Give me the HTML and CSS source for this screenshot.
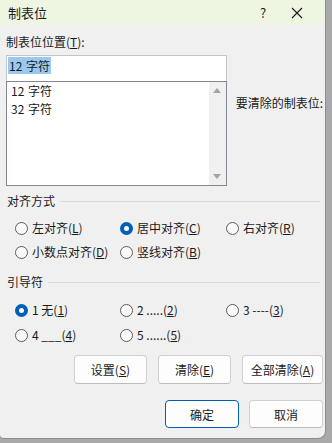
FILE: index.html
```html
<!DOCTYPE html>
<html lang="zh-CN">
<head>
    <meta charset="UTF-8">
    <meta name="viewport" content="width=device-width, initial-scale=1.0">
    <link rel="stylesheet" href="styles.css">
</head>
<body>
    <div class="dialog">
        <!-- Title bar -->
        <div class="titlebar">
            <span class="title">制表位</span>
            <span class="help">?</span>
            <span class="close">
                <svg width="12" height="12" viewBox="0 0 12 12"><path d="M1 1L11 11M11 1L1 11" stroke="#1a1a1a" stroke-width="1.1" fill="none"/></svg>
            </span>
        </div>

        <div class="content">
            <!-- Tab position and list -->
            <div class="tab-row">
                <div class="tab-left">
                    <div class="label">制表位位置(<u>T</u>):</div>
                    <div class="input"><span class="selected">12 字符</span></div>
                    <div class="list">
                        <div class="items">
                            <div>12 字符</div>
                            <div>32 字符</div>
                        </div>
                        <div class="scrollbar">
                            <span class="arrow up"></span>
                            <span class="arrow down"></span>
                        </div>
                    </div>
                </div>
                <div class="tab-right">要清除的制表位:</div>
            </div>

            <!-- Alignment -->
            <div class="group-title">对齐方式</div>
            <div class="radio-grid first">
                <label class="radio"><span class="dot"></span>左对齐(<u>L</u>)</label>
                <label class="radio"><span class="dot checked"></span>居中对齐(<u>C</u>)</label>
                <label class="radio"><span class="dot"></span>右对齐(<u>R</u>)</label>
            </div>
            <div class="radio-grid second">
                <label class="radio"><span class="dot"></span>小数点对齐(<u>D</u>)</label>
                <label class="radio"><span class="dot"></span>竖线对齐(<u>B</u>)</label>
            </div>

            <!-- Leader -->
            <div class="group-title leader">引导符</div>
            <div class="radio-grid lead-first">
                <label class="radio"><span class="dot checked"></span>1 无(<u>1</u>)</label>
                <label class="radio"><span class="dot"></span>2 .....(<u>2</u>)</label>
                <label class="radio"><span class="dot"></span>3 ----(<u>3</u>)</label>
            </div>
            <div class="radio-grid lead-second">
                <label class="radio"><span class="dot"></span>4 ___(<u>4</u>)</label>
                <label class="radio"><span class="dot"></span>5 ......(<u>5</u>)</label>
            </div>

            <!-- Buttons -->
            <div class="button-row">
                <button class="btn">设置(<u>S</u>)</button>
                <button class="btn">清除(<u>E</u>)</button>
                <button class="btn wide">全部清除(<u>A</u>)</button>
            </div>
            <div class="button-row ok-row">
                <button class="btn default">确定</button>
                <button class="btn">取消</button>
            </div>
        </div>
    </div>
</body>
</html>
```

FILE: styles.css
```css
body {
    margin: 0;
    width: 332px;
    height: 443px;
    overflow: hidden;
    background-color: #a9a9a9;
    font-family: "Noto Sans CJK SC", "Noto Sans", sans-serif;
    font-size: 12px;
    line-height: 16px;
    color: #1a1a1a;
}

.dialog {
    width: 325px;
    height: 438px;
    background-color: #f0f0f0;
    border-right: 1px solid #8c8c8c;
    border-bottom: 1px solid #8c8c8c;
    border-bottom-right-radius: 8px;
    border-bottom-left-radius: 4px;
    overflow: hidden;
}

/* Title bar */
.titlebar {
    height: 25px;
    display: flex;
    align-items: center;
    background-color: #eef6e1;
    padding-left: 8px;
}

.title {
    flex: 1;
    font-size: 13px;
}

.help {
    width: 36px;
    text-align: center;
    font-size: 13px;
}

.close {
    width: 32px;
    display: flex;
    justify-content: center;
    margin-right: 12px;
}

/* Content */
.content {
    padding: 0 2px 0 6px;
}

.tab-row {
    display: flex;
    margin-top: 9px;
}

.tab-left {
    width: 222px;
}

.tab-right {
    margin-top: 61px;
    padding-left: 9px;
    white-space: nowrap;
}

.input {
    margin-top: 5px;
    height: 26px;
    box-sizing: border-box;
    background-color: #fff;
    border: 1px solid #c4c4c4;
    border-bottom: none;
    padding: 1px 1px 0;
}

.input .selected {
    display: inline-block;
    background-color: #99c9ef;
    line-height: 17px;
    padding: 0 1px;
    word-spacing: 1px;
}

.list {
    height: 105px;
    box-sizing: border-box;
    border: 1px solid #828790;
    background-color: #fff;
    display: flex;
}

.items {
    flex: 1;
    padding: 0 0 0 4px;
    line-height: 18px;
    word-spacing: 1px;
}

.scrollbar {
    width: 17px;
    background-color: #f0f0f0;
    display: flex;
    flex-direction: column;
    justify-content: space-between;
    align-items: center;
    padding: 6px 0;
}

.arrow {
    width: 0;
    height: 0;
    border-left: 4px solid transparent;
    border-right: 4px solid transparent;
}

.arrow.up {
    border-bottom: 5px solid #a3a3a3;
}

.arrow.down {
    border-top: 5px solid #a3a3a3;
}

/* Groups */
.group-title {
    display: flex;
    align-items: center;
    margin-top: 7px;
    padding-left: 1px;
}

.group-title::after {
    content: "";
    flex: 1;
    height: 1px;
    background-color: #d9d9d9;
    margin: 0 3px 0 5px;
}

.group-title.leader {
    margin-top: 14px;
}

.radio-grid {
    display: grid;
    grid-template-columns: 105px 106px 1fr;
    padding-left: 9px;
}

.radio-grid.first { margin-top: 11px; }
.radio-grid.second { margin-top: 8px; }
.radio-grid.lead-first { margin-top: 12px; }
.radio-grid.lead-second { margin-top: 9px; }

.radio {
    display: flex;
    align-items: center;
    white-space: nowrap;
}

.dot {
    width: 13px;
    height: 13px;
    box-sizing: border-box;
    border: 1px solid #5c5c5c;
    border-radius: 50%;
    background-color: #fafafa;
    margin-right: 4px;
}

.dot.checked {
    border: 4px solid #005fb8;
    background-color: #fff;
}

/* Buttons */
.button-row {
    display: flex;
    justify-content: flex-end;
    gap: 11px;
    margin-top: 12px;
}

.button-row.ok-row {
    gap: 10px;
    margin-top: 16px;
}

.btn {
    width: 73px;
    height: 29px;
    box-sizing: border-box;
    font-family: inherit;
    font-size: 12px;
    color: #1a1a1a;
    background-color: #fdfdfd;
    border: 1px solid #d0d0d0;
    border-bottom-color: #bcbcbc;
    border-radius: 4px;
    padding: 0;
}

.btn.wide {
    width: 81px;
}

.ok-row .btn {
    width: 74px;
    height: 28px;
}

.btn.default {
    border: 1px solid #005fb8;
}
```
